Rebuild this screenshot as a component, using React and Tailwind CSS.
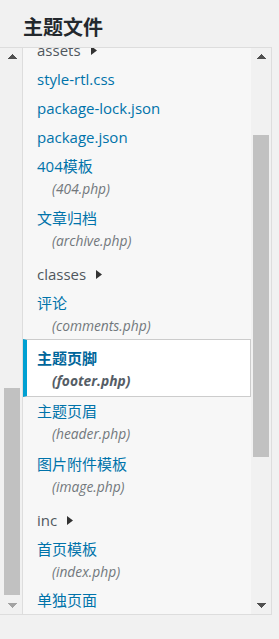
const FONT = "font-['Open_Sans','Noto_Sans_CJK_SC',sans-serif]";

function ArrowUp({ color = "#505050" }) {
  return (
    <svg width="10" height="5" viewBox="0 0 10 5" shapeRendering="crispEdges">
      <polygon points="0,5 5,0 10,5" fill={color} />
    </svg>
  );
}

function ArrowDown({ color = "#505050" }) {
  return (
    <svg width="10" height="5" viewBox="0 0 10 5" shapeRendering="crispEdges">
      <polygon points="0,0 10,0 5,5" fill={color} />
    </svg>
  );
}

function Caret() {
  return (
    <svg width="6" height="9" viewBox="0 0 6 9" className="inline-block ml-[10px] mb-[3px]">
      <polygon points="0,0 6,4.5 0,9" fill="#333333" />
    </svg>
  );
}

function Folder({ name, className = "" }) {
  return (
    <div className={`pl-[14px] py-[3px] ${className}`}>
      <div className="leading-[23px] text-[15px] text-[#50575e]">
        {name}
        <Caret />
      </div>
    </div>
  );
}

function File({ title, file, className = "" }) {
  return (
    <div className={`pl-[14px] py-[3px] ${className}`}>
      <div className="leading-[23px] text-[15px] text-[#0073aa]">{title}</div>
      {file && (
        <div className="leading-[22px] text-[13.8px] italic text-[#72777c] pl-[15px]">{file}</div>
      )}
    </div>
  );
}

function Selected({ title, file }) {
  return (
    <div className="-mt-px bg-white border border-[#cccccc] border-l-4 border-l-[#00a0d2] pl-[10px] pt-[7px] pb-[4px]">
      <div className="leading-[23px] text-[15px] font-bold text-[#00669b]">{title}</div>
      <div className="leading-[22px] text-[13.8px] italic font-bold text-[#555d66] pl-[15px]">{file}</div>
    </div>
  );
}

export default function App() {
  return (
    <div className={`w-[279px] h-[639px] bg-[#f1f1f1] overflow-hidden ${FONT}`}>
      <div className="h-[47px] pl-[23px] pt-[14px] text-[20px] leading-[28px] font-bold text-[#23282d]">
        主题文件
      </div>
      <div className="w-[272px] h-[568px] border-t border-r border-b border-[#dddddd] flex">
        {/* left scrollbar */}
        <div className="w-[23px] border-r border-[#dddddd] bg-[#f1f1f1] flex flex-col">
          <div className="h-[17px] flex items-center pl-[7px]">
            <ArrowUp />
          </div>
          <div className="flex-1">
            <div className="mt-[323px] h-[207px] ml-[4px] w-[16px] bg-[#c1c1c1]" />
          </div>
          <div className="h-[17px] flex items-center pl-[7px]">
            <ArrowDown color="#a3a3a3" />
          </div>
        </div>

        {/* list */}
        <div className="flex-1 bg-[#f7f7f7] overflow-hidden">
          <div className="-mt-[12px]">
            <Folder name="assets" />
            <File title="style-rtl.css" />
            <File title="package-lock.json" />
            <File title="package.json" />
            <File title="404模板" file="(404.php)" />
            <File title="文章归档" file="(archive.php)" className="mt-[1px]" />
            <Folder name="classes" className="mt-[5px]" />
            <File title="评论" file="(comments.php)" />
            <Selected title="主题页脚" file="(footer.php)" />
            <File title="主题页眉" file="(header.php)" />
            <File title="图片附件模板" file="(image.php)" className="mt-[2px]" />
            <Folder name="inc" className="mt-[5px]" />
            <File title="首页模板" file="(index.php)" />
            <File title="单独页面" />
          </div>
        </div>

        {/* right scrollbar */}
        <div className="w-[20px] bg-[#f1f1f1] flex flex-col">
          <div className="h-[17px] flex items-center pl-[5px]">
            <ArrowUp />
          </div>
          <div className="flex-1">
            <div className="mt-[70px] h-[322px] ml-[2px] w-[16px] bg-[#c1c1c1]" />
          </div>
          <div className="h-[17px] flex items-center pl-[5px]">
            <ArrowDown />
          </div>
        </div>
      </div>
    </div>
  );
}
